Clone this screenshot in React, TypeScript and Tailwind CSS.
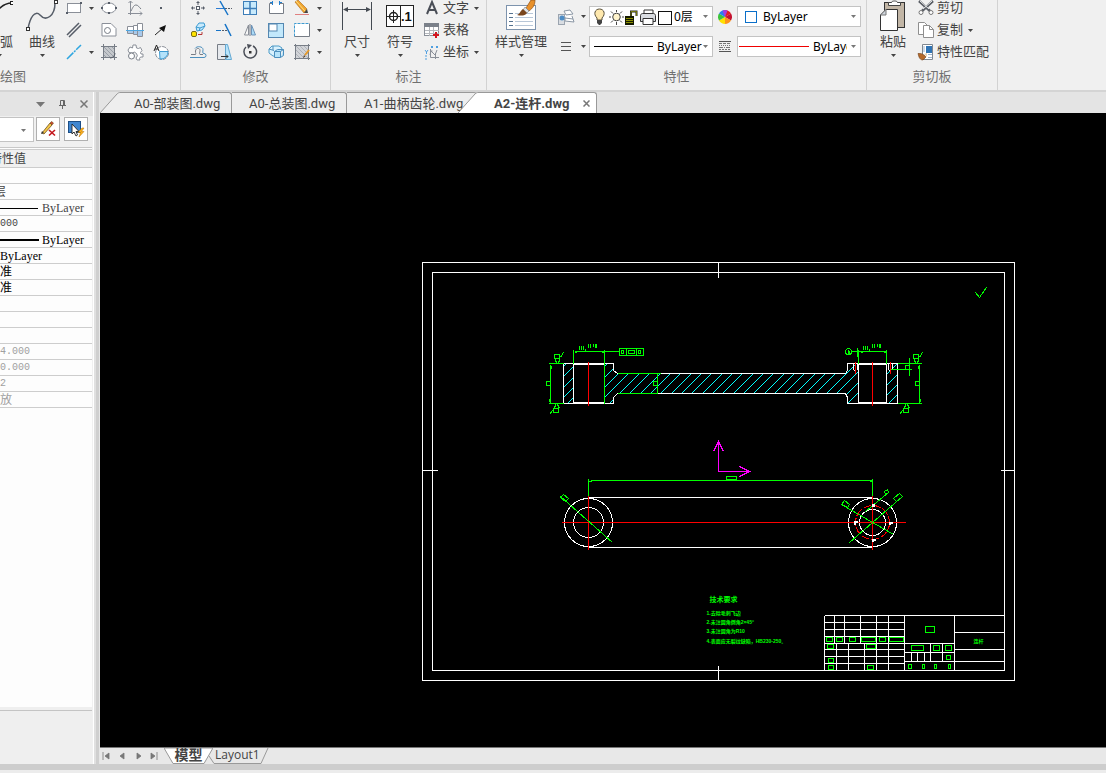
import React, { useState } from "react";
import type { ReactNode } from "react";

const Caret = ({ className = "", tone = "#444" }: { className?: string; tone?: string }) => (
  <svg width="5" height="3" viewBox="0 0 5 3" className={`shrink-0 ${className}`} aria-hidden="true">
    <path d="M0 0h5L2.5 3z" fill={tone} />
  </svg>
);

const CaretButton = ({ label }: { label: string }) => (
  <button type="button" aria-label={label} className="flex h-full w-full items-center justify-center">
    <Caret />
  </button>
);

const groupTitle = "text-[13px] leading-[27px] text-[#707070]";

function Group({ title, className, children }: { title: string; className: string; children: ReactNode }) {
  return (
    <section className={`flex shrink-0 flex-col border-r border-[#d2d2d2] ${className}`}>
      <div className="flex h-[66px] items-start">{children}</div>
      <h2 className={`text-center ${groupTitle}`}>{title}</h2>
    </section>
  );
}

function BigButton({ label, className, icon }: { label: string; className: string; icon: ReactNode }) {
  return (
    <button type="button" className={`flex shrink-0 flex-col items-center ${className}`}>
      {icon}
      <span className="text-[13px] leading-5 whitespace-nowrap">{label}</span>
      <Caret className="mt-[3px]" />
    </button>
  );
}

/* Big icons are drawn on a 34px high sheet. */
const Big = ({ w, children }: { w: number; children: ReactNode }) => (
  <svg width={w} height="34" viewBox={`0 0 ${w} 34`} fill="none" className="shrink-0" aria-hidden="true">
    {children}
  </svg>
);

/* Small icons are centred on 11,11. */
const Ico = ({ children }: { children: ReactNode }) => (
  <svg width="22" height="22" viewBox="0 0 22 22" fill="none" className="shrink-0" aria-hidden="true">
    {children}
  </svg>
);

const Node = ({ x, y }: { x: number; y: number }) => (
  <rect x={x - 1} y={y - 1} width="2" height="2" fill="#565d68" />
);

const drawTools: [string, ReactNode][][] = [
  [
    ["矩形", <Ico><rect x="4.500" y="6.500" width="13" height="9" fill="#fff" stroke="#8a8f98" /><Node x={4} y={16} /><Node x={18} y={6} /></Ico>],
    ["", null],
    ["椭圆", <Ico><ellipse cx="11" cy="11" rx="7" ry="5" fill="#fff" stroke="#8a8f98" /><Node x={4} y={11} /><Node x={18} y={11} /><Node x={11} y={6} /><Node x={11} y={16} /></Ico>],
    ["公式曲线", <Ico><path d="M6.500 4v14M4 16.500h14M4.500 6l2-2 2 2M16 14.500l2 2-2 2" stroke="#8a8f98" /><path d="M7 14c2-4 3-6 5-6s3 2 5 4" stroke="#777d86" /></Ico>],
    ["点", <Ico><rect x="10" y="10" width="2" height="2" fill="#565d68" /></Ico>],
  ],
  [
    ["平行线", <Ico><path d="M4 16 16 4M6 18 18 6" stroke="#565d68" strokeWidth="1.500" /></Ico>],
    ["", null],
    ["多边形", <Ico><path d="M4 4.500h9l5 5v7.500H4z" fill="#fff" stroke="#8a8f98" /><circle cx="9.500" cy="11.500" r="3" stroke="#777d86" /></Ico>],
    ["轴", <Ico><path d="M3.500 7.500h6v-1h4V4.500h5v13h-5v-2h-4v-1h-6z" fill="#fff" /><path d="M4 12h5.500v2H4zM10 12h4v3h-4zM14 12h4v5h-4z" fill="#a9c9ea" /><path d="M3.500 7.500h6v-1h4V4.500h5v13h-5v-2h-4v-1h-6zM9.500 7v8M13.500 6v10" stroke="#8a8f98" /><path d="M2 11.500h18" stroke="#4da6e0" /></Ico>],
    ["箭头", <Ico><path d="m5 16 8-7" stroke="#222" /><path d="m16 6-7 3 5 4z" fill="#111" /></Ico>],
  ],
  [
    ["中心线", <Ico><path d="M4 18 18 4" stroke="#2fa6e0" strokeWidth="1.500" strokeDasharray="9 1 2 1" /></Ico>],
    ["", null],
    ["填充", <Ico><rect x="5" y="5" width="12" height="12" fill="#c5c8cc" /><path d="m5 9 8 8M5 13l4 4M5 5l12 12M9 5l8 8M13 5l4 4" stroke="#9aa0a8" /><path d="M5.500 3v16M16.500 3v16M3 5.500h16M3 16.500h16" stroke="#777d86" /><path d="M17 12a5 5 0 0 1-5 5" stroke="#565d68" /></Ico>],
    ["齿轮", <Ico><path d="M5 11.500 4 9l2-3 2.500 1L9 4h3l.5 3 2 .5 2-1 1.500 3-1.500 2 .5 1.500h2v3h-2.500l-1 1.500.5 1.500h-3l-1-2a3 3 0 1 0-4-5z" fill="#fff" stroke="#8a8f98" /><circle cx="7.500" cy="15" r="3" fill="#fff" stroke="#777d86" /></Ico>],
    ["局部放大", <Ico><circle cx="12" cy="12" r="6.500" fill="#fff" stroke="#8a8f98" strokeDasharray="4 1" /><path d="M9.500 10.500h8.500a7 7 0 0 1-8 7.500z" fill="#b4e2fa" stroke="#3d9ad1" /><path d="m4 10 2.500-6L9 10M5 8h3" stroke="#222" /></Ico>],
  ],
];

const editTools: [string, ReactNode][][] = [
  [
    ["移动", <Ico><path d="m11 4 2 2H9zM11 18l2-2H9zM4 11l2-2v4zM18 11l-2-2v4z" fill="#565d68" /><path d="M11 6v2M11 14v2M6 11h2M14 11h2" stroke="#565d68" /><rect x="9.500" y="9.500" width="3" height="3" fill="#fff" stroke="#565d68" /></Ico>],
    ["裁剪", <Ico><path d="M3 11.500h8" stroke="#2b7cd3" /><path d="M12 11.500h7" stroke="#565d68" strokeDasharray="2 1" /><path d="m7 4 8 14" stroke="#1673c7" strokeWidth="1.500" /></Ico>],
    ["阵列", <Ico><rect x="4.500" y="4.500" width="13" height="13" fill="#c8eafc" stroke="#3d7eb8" /><rect x="5" y="12" width="6" height="5" fill="#fff" /><path d="M11 4.500v13M4.500 11.500h13" stroke="#3d7eb8" strokeWidth="1.500" /></Ico>],
    ["打断", <Ico><path d="M7 6.500H4.500v10h14v-10H15" fill="#fff" stroke="#777d86" /><path d="M7.500 4v4M14.500 4v4M5 5.500h3M14 5.500h3" stroke="#2280d0" /></Ico>],
    ["删除", <Ico><path d="m4 5 3-2 9 9-3 4z" fill="#f0a52e" stroke="#a9671a" strokeWidth=".6" /><path d="m5 4 9 10" stroke="#ffdf83" /><path d="m13 16 3-4 1 4z" fill="#444" /><path d="M4 17.500h14" stroke="#e08080" /></Ico>],
  ],
  [
    ["复制对象", <Ico><path d="m9 8 3-4h5l1 3-3 4-5 1z" fill="#c8eafc" stroke="#3d9ad1" /><path d="m9 8 4 1 5-2M13 9l-1 3" stroke="#3d9ad1" /><rect x="4.500" y="12.500" width="5" height="5" rx="1.500" fill="#ffe400" stroke="#776d19" /><path d="M11 15.500h4V13" stroke="#b43535" /></Ico>],
    ["延伸", <Ico><path d="M3 11.500h5" stroke="#1673c7" /><path d="M9 11.500h5" stroke="#565d68" strokeDasharray="2 1" /><path d="m12 5 6 12" stroke="#1673c7" strokeWidth="1.500" /></Ico>],
    ["镜像", <Ico><path d="M9.500 6v10h-4z" fill="#f7f7f7" stroke="#8a8f98" /><path d="M12.500 6v10h4z" fill="#a9daf6" stroke="#6d93b8" /><path d="M11 5v12" stroke="#777d86" /></Ico>],
    ["缩放", <Ico><rect x="3.500" y="4.500" width="15" height="14" fill="#c2e8fb" stroke="#5487b1" /><rect x="4" y="5" width="8" height="7" fill="#fff" stroke="#5487b1" /></Ico>],
    ["拉伸", <Ico><rect x="3.500" y="4.500" width="15" height="13" fill="#fff" /><path d="M3.500 17.500v-13h15" stroke="#3d9ad1" strokeDasharray="3 1" /><path d="M3.500 17.500h15v-13" stroke="#777d86" /></Ico>],
  ],
  [
    ["等距线", <Ico><path d="M4 13.500h4.500c1-1-1-3 .5-5s4-1 4 1-1 3 0 4h3" stroke="#777d86" /><path d="M3 16.500h14a2 2 0 0 0 0-4c-2 0-1-2-1-4 0-3-6-4-8-1" stroke="#4d8fbd" /></Ico>],
    ["拉伸面", <Ico><path d="M4.500 3.500h8v15h-8z" fill="#e6e9ed" stroke="#777d86" /><path d="M12.500 3.500h2l4 15h-6z" fill="#b7e4fb" stroke="#64a8d2" /><path d="M8 15.500h7m-2-2 2 2-2 2" stroke="#333" /></Ico>],
    ["旋转", <Ico><path d="M7 6a6.300 6.300 0 1 0 7-1" stroke="#4b4f58" strokeWidth="1.500" /><path d="m8 3 5 1-4 4z" fill="#4b4f58" /><rect x="10" y="10" width="2.500" height="2.500" fill="#333" /></Ico>],
    ["分解", <Ico><path d="m4 8 3-3h7l3 2-1 3-3 2v4l-5-1-4-3z" fill="#d9f1fd" stroke="#4d9cc8" /><path d="M9.500 10.500h6v6h-6zM9.500 10.500l3-2h6l-3 2M18.500 8.500v6l-3 2" fill="#b7e4fb" stroke="#4d8fbd" /><path d="m4 8 5 1.500M8 5v4" stroke="#4d8fbd" /></Ico>],
    ["填充编辑", <Ico><rect x="5" y="5" width="12" height="12" fill="#d2d4d8" /><path d="m5 9 8 8M5 13l4 4M5 5l12 12M9 5l8 8M13 5l4 4" stroke="#aeb2b8" /><path d="M4.500 3v16M17.500 3v16M3 4.500h16M3 17.500h16" stroke="#777d86" /><path d="m14 14 4-5" stroke="#e69a29" strokeWidth="2" /><path d="m12 17 1-3 1.500 1.500z" fill="#5b4530" /></Ico>],
  ],
];

function ToolGrid({ tools, className, carets }: { tools: [string, ReactNode][][]; className: string; carets: string[] }) {
  return (
    <div className={`grid auto-rows-[22px] items-center justify-items-center ${className}`}>
      {tools.flatMap((row, r) =>
        row.map(([name, icon], c) => {
          if (!icon) return carets[r] ? <CaretButton key={`${r}-${c}`} label={carets[r]} /> : <span key={`${r}-${c}`} />;
          return (
            <button key={`${r}-${c}`} type="button" aria-label={name}>
              {icon}
            </button>
          );
        }),
      )}
    </div>
  );
}

function ItemRow({ icon, label, caret }: { icon: ReactNode; label: string; caret?: boolean }) {
  return (
    <button type="button" className="flex h-[22px] items-center text-[13px] leading-5 whitespace-nowrap">
      {icon}
      <span className="pb-[2px]">{label}</span>
      {caret && <Caret className="ml-[5px]" />}
    </button>
  );
}

function Combo({ label, value, pad, children }: { label: string; value: string; pad: string; children?: ReactNode }) {
  return (
    <div className="relative h-[21px]">
      <select
        aria-label={label}
        defaultValue={value}
        className={`h-[21px] w-full appearance-none overflow-hidden border border-[#c3c3c3] bg-white font-['Noto_Sans','Noto_Sans_CJK_SC',sans-serif] text-[12px] leading-[19px] text-black outline-none ${pad}`}
      >
        <option>{value}</option>
      </select>
      <span className="pointer-events-none absolute inset-0 flex items-center">
        {children}
        <Caret className="mr-[5px] ml-auto" tone="#777" />
      </span>
    </div>
  );
}

function Ribbon() {
  const editRows = editTools.map((row) => [...row, ["", null] as [string, ReactNode]]);
  return (
    <header className="-mt-[3px] flex shrink-0 border-b-2 border-[#d4d4d4] bg-[#f0f0f0]">
      <section className="flex w-[181px] shrink-0 flex-col border-r border-[#d2d2d2]">
        <div className="flex h-[66px] items-start">
          <button type="button" aria-label="圆弧" className="flex w-[13px] shrink-0 flex-col items-start">
            <Big w={13}>
              <path d="M-3 14C2 8 6 6 12 6" stroke="#222" strokeWidth="1.500" />
              <rect x="10.500" y="4.500" width="3" height="3" fill="#fff" stroke="#222" />
            </Big>
            <span className="text-[13px] leading-5">弧</span>
            <Caret className="mt-[3px] -ml-[3px]" />
          </button>
          <BigButton
            label="曲线"
            className="ml-[9px] w-10"
            icon={
              <Big w={32}>
                <path d="M2 32c2-12 7-19 12-14 6 7 15 1 15-12" stroke="#565d68" strokeWidth="1.500" />
                <rect x=".5" y="30.500" width="3" height="3" fill="#fff" stroke="#333" />
                <rect x="28.500" y="3.500" width="3" height="3" fill="#fff" stroke="#333" />
              </Big>
            }
          />
          <ToolGrid tools={drawTools} className="grid-cols-[24px_10px_26px_26px_26px]" carets={["矩形选项", "", "中心线选项"]} />
        </div>
        <h2 className={groupTitle}>绘图</h2>
      </section>

      <Group title="修改" className="w-[150px]">
        <ToolGrid tools={editRows} className="ml-1 grid-cols-[26px_26px_26px_26px_26px_9px]" carets={["删除选项", "拉伸选项", "编辑选项"]} />
      </Group>

      <Group title="标注" className="w-[156px]">
        <BigButton
          label="尺寸"
          className="ml-1 w-11"
          icon={
            <Big w={30}>
              <path d="M.5 5v28M29.500 5v28" stroke="#444a52" />
              <path d="M2 12.500h26" stroke="#444a52" />
              <path d="m1 12.500 5-2.500v5zM29 12.500l-5-2.500v5z" fill="#444a52" />
            </Big>
          }
        />
        <BigButton
          label="符号"
          className="w-[42px]"
          icon={
            <Big w={28}>
              <rect x=".5" y="8.500" width="27" height="21" fill="#fff" stroke="#222" />
              <path d="M14.500 8v21M1 19.500h13M7.500 13v13" stroke="#222" />
              <circle cx="7.500" cy="19.500" r="4" stroke="#222" strokeWidth="1.500" />
              <text x="15" y="24" fontSize="13" fontWeight="700" fontFamily="Liberation Sans, sans-serif" fill="#111">.1</text>
            </Big>
          }
        />
        <div>
          <ItemRow label="文字" caret icon={<Ico><path d="m6 17 5-12 5 12M7.500 13h7" stroke="#4a4e57" strokeWidth="2" /></Ico>} />
          <ItemRow
            label="表格"
            icon={
              <Ico>
                <rect x="3.500" y="4.500" width="14" height="12" fill="#fff" stroke="#8a8f98" />
                <path d="M3 4h15v4H3z" fill="#7b818a" />
                <path d="M4 11.500h14M4 14.500h14M8.500 8v9M12.500 8v9" stroke="#b5b8bd" />
                <path d="M15 13v6M12 16h6" stroke="#d3161f" strokeWidth="2" />
              </Ico>
            }
          />
          <ItemRow
            label="坐标"
            caret
            icon={
              <Ico>
                <path d="M9.500 8v8.500H18M9 14l1-4 4 4 2-5M14.500 12v6M9.500 10h2" stroke="#8a8f98" />
                <path d="M4 9l1.500 2L7 9M5.500 11v2M4 15h2M4 18h2M10 5l2 2m0-2-2 2M15 5l2 2m0-2-2 2" stroke="#4f9fe0" />
              </Ico>
            }
          />
        </div>
      </Group>

      <Group title="特性" className="w-[380px]">
        <BigButton
          label="样式管理"
          className="ml-[3px] w-[62px]"
          icon={
            <Big w={32}>
              <rect x="1.500" y="8.500" width="29" height="24" fill="#fff" stroke="#7d93ad" />
              <path d="M4 16.500h4M4 20.500h4M4 24.500h4M4 28.500h4" stroke="#54718f" />
              <path d="M10 16.500h18M10 20.500h18M10 24.500h18M10 28.500h18" stroke="#b8c7d8" />
              <path d="M30 3h-4l-5 8 3 3c4-3 6-6 6-11z" fill="#e8912c" stroke="#8a4f18" strokeWidth=".7" />
              <path d="m20 10 4 4-2 2-4-3z" fill="#dfe3e7" stroke="#767b82" strokeWidth=".6" />
              <path d="m18 12 4 4c-2 3-6 3-10 2 3-1 3-4 6-6z" fill="#7a461c" />
            </Big>
          }
        />
        <div className="mt-[9px] ml-[2px] grid auto-rows-[21px] grid-cols-[24px_11px_124px_24px_124px] gap-y-[9px]">
          <button type="button" aria-label="图层" className="flex items-center justify-center">
            <Ico>
              <path d="m9 5 6-1 3 4-7 1zM9 8l1 4 8 1-1-3M10 12v3l9 1-1-3" fill="#fff" stroke="#8b97a5" />
              <rect x="3.500" y="8.500" width="6" height="10" fill="#d9dde2" stroke="#9ba4af" />
              <circle cx="7" cy="12" r="2.500" fill="#4d8dc6" />
            </Ico>
          </button>
          <CaretButton label="图层选项" />
          <Combo label="当前图层" value="0层" pad="pl-[84px]">
            <svg width="84" height="21" viewBox="0 0 84 21" fill="none" aria-hidden="true">
              <path d="M8 12c-4-4-2-9 2.500-9s6.500 5 2.500 9v2H8z" fill="#ffe9ae" stroke="#58503c" />
              <path d="M8 14h5v3l-2 2H10l-2-2z" fill="#444" />
              <circle cx="27.500" cy="11" r="3.800" fill="#fff4cc" stroke="#444" />
              <path d="M27.500 4v2M27.500 16v3M20 11h2M33 11h2M22 5.500l2 2M31 14.500l2 2M33 5.500l-2 2M24 14.500l-2 2" stroke="#444" />
              <path d="M36 10h9v9h-9z" fill="#151a00" />
              <path d="M37 12.500h7M37 14.500h7M37 16.500h7" stroke="#a8ac00" strokeWidth=".8" />
              <path d="M42 10V5.500h5.500V10" stroke="#222" strokeWidth="2" />
              <path d="M42 10V5.500h5.500V10" stroke="#a8ac00" strokeWidth=".6" />
              <path d="M55 9V4h9v5" fill="#fff" stroke="#333" />
              <path d="M51.500 9.500c0-1 1-2 2-2h11c1 0 2 1 2 2v6h-15z" fill="#d9dce1" stroke="#333" />
              <path d="M54 12.500h10v6H54z" fill="#fff" stroke="#333" />
              <rect x="69.500" y="5.500" width="13" height="13" fill="#fff" stroke="#111" />
            </svg>
          </Combo>
          <button type="button" aria-label="颜色" className="flex items-center justify-center">
            <svg width="14" height="14" viewBox="-7 -7 14 14" aria-hidden="true">
              <path d="M0 0V-7A7 7 0 0 1 6 -3.500z" fill="#e41c23" />
              <path d="M0 0 6-3.500A7 7 0 0 1 6 3.500z" fill="#c41230" />
              <path d="M0 0 6 3.500A7 7 0 0 1 0 7z" fill="#ff941a" />
              <path d="M0 0V7A7 7 0 0 1-6 3.500z" fill="#ffe100" />
              <path d="M0 0-6 3.500A7 7 0 0 1-6-3.500z" fill="#3dc43c" />
              <path d="M0 0-6-3.500A7 7 0 0 1 0-7z" fill="#2d7cf0" />
              <path d="M0 0-2.500-6.500A7 7 0 0 1 2.500-6.500z" fill="#a63bde" />
            </svg>
          </button>
          <Combo label="当前颜色" value="ByLayer" pad="pl-[25px]">
            <span className="ml-2 size-3 border border-[#0a6fc9] bg-white" />
          </Combo>
          <button type="button" aria-label="线宽" className="flex items-center justify-center">
            <svg width="10" height="9" viewBox="0 0 10 9" shapeRendering="crispEdges" aria-hidden="true">
              <path d="M0 .5h10M0 4.500h10M0 8.500h10" stroke="#555" />
            </svg>
          </button>
          <CaretButton label="线宽选项" />
          <Combo label="当前线宽" value="ByLayer" pad="pl-[67px]">
            <span className="ml-[5px] h-px w-[59px] bg-black" />
          </Combo>
          <button type="button" aria-label="线型" className="flex items-center justify-center">
            <svg width="12" height="11" viewBox="0 0 12 11" shapeRendering="crispEdges" aria-hidden="true">
              <path d="M0 .5h12M0 10.500h12" stroke="#555" />
              <path d="M0 2.500h12" stroke="#777" strokeDasharray="3 1" />
              <path d="M0 4.500h12" stroke="#777" strokeDasharray="1 1" />
              <path d="M0 6.500h12" stroke="#777" strokeDasharray="4 1 1 1" />
              <path d="M0 8.500h12" stroke="#777" strokeDasharray="2 1" />
            </svg>
          </button>
          <Combo label="当前线型" value="ByLayer" pad="pl-[75px] pr-[13px]">
            <span className="ml-[2px] h-px w-[70px] bg-[#f00000]" />
          </Combo>
        </div>
      </Group>

      <Group title="剪切板" className="w-[131px]">
        <BigButton
          label="粘贴"
          className="ml-1 w-11"
          icon={
            <Big w={26}>
              <rect x="4.500" y="5.500" width="20" height="25" fill="#c2b6a6" stroke="#333" />
              <path d="M8.500 8.500v-3h3c0-2 6-2 6 0h3v3z" fill="#fff" stroke="#444" />
              <path d="M6 12.500h11.500v21H.5V18z" fill="#fff" stroke="#333" />
              <path d="M6 12.500V18H.5z" fill="#cfd6dd" stroke="#777" />
            </Big>
          }
        />
        <div>
          <ItemRow
            label="剪切"
            icon={
              <Ico>
                <path d="m4 4 11 10M18 4 7 14" stroke="#5a5e65" strokeWidth="2.500" />
                <path d="m5 4 9 8M17 4 8 12" stroke="#e8eaec" />
                <circle cx="6" cy="15.500" r="2" fill="#fff" stroke="#777" />
                <circle cx="16" cy="15.500" r="2" fill="#fff" stroke="#777" />
              </Ico>
            }
          />
          <ItemRow
            label="复制"
            caret
            icon={
              <Ico>
                <path d="M3.500 3.500h6l3 3v9h-9z" fill="#fff" stroke="#8f8f8f" />
                <path d="M8.500 6.500h6l4 4v8h-10z" fill="#fff" stroke="#8f8f8f" />
                <path d="M14.500 6.500v4h4" stroke="#8f8f8f" />
              </Ico>
            }
          />
          <ItemRow
            label="特性匹配"
            icon={
              <Ico>
                <path d="M7.500 3.500h10v15h-10z" fill="#fff" stroke="#7f8790" />
                <path d="M11 5h6v7h-6z" fill="#2f74b5" />
                <path d="M9 5v6M13 13.500h4M13 16.500h4" stroke="#9db4cc" />
                <path d="M3 12.500c3 0 4 0 6 1.500l2 2-3 3c-2 0-3-1-4-3z" fill="#b5692a" stroke="#6e3e17" strokeWidth=".6" />
                <path d="m9 13 3-1v4z" fill="#ead4b4" />
              </Ico>
            }
          />
        </div>
      </Group>
    </header>
  );
}

/* ---------- property panel ---------- */

const cell = "h-4 border-b border-[#cdcdcd] p-0 text-left font-normal whitespace-nowrap";

function LineValue({ bold }: { bold?: boolean }) {
  return (
    <span className="flex items-center">
      <span className={bold ? "h-[2px] w-[39px] bg-black" : "h-px w-[38px] bg-black"} />
      <span className={bold ? "ml-[3px]" : "ml-1"}>ByLayer</span>
    </span>
  );
}

const Num = ({ children }: { children: ReactNode }) => (
  <span className="block font-['Liberation_Mono',monospace] text-[10px] leading-[15px]">{children}</span>
);

const rows: { name: string; value: ReactNode; tone: string }[] = [
  { name: "常规", value: "", tone: "text-[#444]" },
  { name: "层", value: <span className="-ml-[6px] block">层</span>, tone: "text-[#444]" },
  { name: "线型", value: <LineValue />, tone: "text-[#444]" },
  { name: "线型比例", value: <Num>000</Num>, tone: "text-[#444]" },
  { name: "线宽", value: <LineValue bold />, tone: "text-black" },
  { name: "颜色", value: "ByLayer", tone: "text-black" },
  { name: "文本风格", value: "准", tone: "text-black" },
  { name: "标注风格", value: "准", tone: "text-black" },
  { name: "空行一", value: "", tone: "text-black" },
  { name: "空行二", value: "", tone: "text-black" },
  { name: "空行三", value: "", tone: "text-black" },
  { name: "宽度", value: <Num>4.000</Num>, tone: "text-[#a0a0a0]" },
  { name: "高度", value: <Num>0.000</Num>, tone: "text-[#a0a0a0]" },
  { name: "图幅", value: <Num>2</Num>, tone: "text-[#a0a0a0]" },
  { name: "方向", value: "放", tone: "text-[#a0a0a0]" },
];

function PropertyPanel() {
  return (
    <aside className="flex w-[100px] shrink-0 border-r border-[#e6e6e6] bg-[#f0f0f0]">
      <div className="flex min-w-0 flex-1 flex-col">
        <div className="flex h-6 shrink-0 items-center justify-end gap-[14px] bg-[#e4e4e4] pr-[5px]">
          <button type="button" aria-label="面板菜单">
            <svg width="9" height="5" viewBox="0 0 9 5" aria-hidden="true"><path d="M0 0h9L4.500 5z" fill="#777" /></svg>
          </button>
          <button type="button" aria-label="固定面板">
            <svg width="7" height="9" viewBox="0 0 7 9" fill="none" aria-hidden="true"><path d="M1.500 5V.5h4V5M0 5.500h7M3.500 6v3M4.500 1v4" stroke="#666" /></svg>
          </button>
          <button type="button" aria-label="关闭面板">
            <svg width="8" height="8" viewBox="0 0 8 8" aria-hidden="true"><path d="m.5.5 7 7m0-7-7 7" stroke="#777" strokeWidth="1.500" /></svg>
          </button>
        </div>
        <div className="flex h-[31px] shrink-0 items-start pt-px">
          <div className="relative h-[25px] w-[34px]">
            <select aria-label="选择对象" className="h-[25px] w-[34px] appearance-none border border-l-0 border-[#c3c3c3] bg-white">
              <option> </option>
            </select>
            <Caret className="pointer-events-none absolute top-[12px] left-[21px]" tone="#777" />
          </div>
          <button type="button" aria-label="清除选择" className="ml-[2px] flex size-6 items-center justify-center border border-[#b0b0b0] bg-white">
            <svg width="18" height="18" viewBox="0 0 18 18" fill="none" className="shrink-0" aria-hidden="true">
              <path d="m3 13 8-10 2 2-8 9z" fill="#f4c84a" stroke="#6e4b19" strokeWidth=".8" />
              <path d="m11 3 1.500-1.500 2 1.500L13 5z" fill="#c9472e" stroke="#6e4b19" strokeWidth=".6" />
              <path d="m2 14 1-3 2 2z" fill="#333" />
              <path d="m10 10 6 5.500m0-5.500-6 5.500" stroke="#c4161c" strokeWidth="1.600" />
            </svg>
          </button>
          <button type="button" aria-label="快速选择" className="ml-[4px] flex size-6 items-center justify-center border border-[#b0b0b0] bg-white">
            <svg width="18" height="18" viewBox="0 0 18 18" fill="none" className="shrink-0" aria-hidden="true">
              <rect x="1.500" y="1.500" width="12" height="11" fill="#3f86d0" stroke="#1d4f86" />
              <path d="M5 4v10l2-2 2 4 1.500-1-1.500-3.500h3z" fill="#fff" stroke="#222" strokeWidth=".9" />
              <path d="m15 8-4 4.500h2.500L12 17l5-5.500h-2.500L17 8z" fill="#ffb31a" stroke="#b56c00" strokeWidth=".5" />
            </svg>
          </button>
        </div>
        <div className="mr-px flex-1 overflow-hidden border-t border-[#c8c8c8] bg-[#fdfdfd] pt-px">
          <table className="w-full table-fixed border-separate border-spacing-0 font-['Liberation_Serif','Noto_Sans_CJK_SC',serif] text-[12px] leading-[16px]">
            <thead>
              <tr>
                <th className="h-[19px] border-t border-b border-[#cdcdcd] bg-[#f0f0f0] p-0 text-left font-normal whitespace-nowrap text-[#444]">
                  <div className="-ml-[10px] h-[17px] pt-px">特性值</div>
                </th>
              </tr>
            </thead>
            <tbody>
              {rows.map((r) => (
                <tr key={r.name}>
                  <td className={`${cell} ${r.tone}`}>
                    <div className="h-[15px] overflow-hidden">{r.value}</div>
                  </td>
                </tr>
              ))}
            </tbody>
          </table>
        </div>
        <div className="mr-px h-[57px] shrink-0 bg-[#efefef] pt-[3px]">
          <div className="border-t border-[#c4c4c4]" />
        </div>
      </div>
      <div className="w-px bg-white" />
      <div className="w-[2px] bg-[#e0e0e0]" />
      <div className="w-[3px] bg-[#cfcfcf]" />
    </aside>
  );
}

/* ---------- document tabs ---------- */

const docs = [
  { name: "A0-部装图.dwg", box: "w-[112px] pl-[14px]" },
  { name: "A0-总装图.dwg", box: "w-[115px] pl-[17px]" },
  { name: "A1-曲柄齿轮.dwg", box: "w-[130px] pl-[17px]" },
];

const Slant = ({ fill }: { fill: string }) => (
  <svg width="20" height="21" viewBox="0 0 20 21" className="shrink-0" aria-hidden="true">
    <path d="M0 21 17 2c1-1 2-1.500 3-1.500V21z" fill={fill} />
    <path d="M0 21 17 2c1-1 2-1.500 3-1.500" fill="none" stroke="#999" />
  </svg>
);

function DocTabs() {
  return (
    <nav aria-label="图纸" className="flex h-[21px] shrink-0 bg-[#e4e4e4] font-['Roboto','Noto_Sans_CJK_SC',sans-serif] text-[13px] leading-[19px] text-[#444]">
      <Slant fill="#eeeeee" />
      {docs.map((d) => (
        <button key={d.name} type="button" className={`shrink-0 rounded-tr-[3px] border-t border-r border-[#999] bg-[#eee] text-left whitespace-nowrap ${d.box}`}>
          {d.name}
        </button>
      ))}
      <div className="z-10 -ml-[19px] flex shrink-0">
        <Slant fill="#ffffff" />
        <div className="flex w-[119px] items-center rounded-tr-[3px] border-t border-r border-[#999] bg-white pl-4">
          <button type="button" aria-current="page" className="font-bold whitespace-nowrap">
            A2-连杆.dwg
          </button>
          <button type="button" aria-label="关闭 A2-连杆.dwg" className="mr-[6px] ml-auto">
            <svg width="7" height="7" viewBox="0 0 7 7" aria-hidden="true"><path d="m.5.5 6 6m0-6-6 6" stroke="#777" strokeWidth="1.500" /></svg>
          </button>
        </div>
      </div>
    </nav>
  );
}

/* ---------- drawing ---------- */

const G = "#00ff00";
const hatch = Array.from({ length: 46 }, (_, i) => 929 + Math.round(i * 10.35));
const HUB_LEFT = "M563 363H573V403H563z";
const WEB = "M604 363H613V370L617 373H845L847 370V363H858V403H847V397L845 393H617L613 397V403H604z";
const HUB_RIGHT = "M886 363H897V403H886z";

const Box = ({ b }: { b: [number, number, number, number] }) => <rect x={b[0]} y={b[1]} width={b[2]} height={b[3]} stroke={G} />;

const titleBoxes: [number, number, number, number][] = [
  [826, 637, 6, 4], [836, 637, 6, 4], [849, 637, 6, 4], [861, 637, 14, 4], [879, 637, 6, 4], [889, 637, 14, 4],
  [827, 644, 6, 4], [866, 644, 9, 4], [828, 658, 5, 4], [828, 665, 5, 4], [867, 665, 6, 4],
  [925, 626, 9, 6], [911, 645, 12, 5], [933, 645, 6, 5], [945, 645, 6, 5], [946, 655, 4, 4],
  [908, 664, 3, 4], [922, 664, 2, 4], [934, 664, 2, 4], [948, 664, 2, 4],
];

function Drawing() {
  return (
    <svg className="block h-full w-full" viewBox="100 113 1006 634" preserveAspectRatio="xMinYMin meet" fill="none" shapeRendering="crispEdges" role="img" aria-label="连杆零件图">
      <defs>
        <clipPath id="section">
          <path d={HUB_LEFT} />
          <path d={WEB} />
          <path d={HUB_RIGHT} />
        </clipPath>
      </defs>
      <g transform="translate(.5 .5)" strokeWidth="1">
        {/* sheet */}
        <g stroke="#fff">
          <path d="M422 262h592v418h-592zM432 272h572v398h-572z" />
          <path d="M718 262v15M718 665v15M422 470h15M1000 470h14" />
        </g>
        <path d="m975 292 4 5 7-10" stroke={G} />

        {/* section view */}
        <g clipPath="url(#section)" stroke="#00ffff">
          {hatch.map((s) => (
            <path key={s} d={`M${s - 410} 410 ${s - 355} 355`} />
          ))}
        </g>
        <g stroke="#fff">
          <path d="M563 363H613V370L617 373H845L847 370V363H897V403H847V397L845 393H617L613 397V403H563z" />
          <path d="M573 364H604M573 402H604M858 364H886M858 402H886M573 363V403M858 363V403M886 363V403" />
          <path d="M853 363v6l2 2M857 363v6M888 363v6l2 2M892 363v6" />
        </g>
        <path d="M588 361V405M872 361V405M855 361V373M890 361V373" stroke="#f00" />
        <g stroke={G}>
          <path d="M617 373H660M617 393H656M657 373V393M653 381h4v4h-4z" />
          <path d="M604 349V403M573 349V363M574 351H619M574 352h2M601 352h3M619 348h24v7h-24zM626 348v7M636 348v7M621 350h2v3h-2zM628 350h6v3h-6zM638 350h2v3h-2z" />
          <path d="M579 345v4M581 345v4M583 345v4M585 348v3M588 343v4M590 343v4M592 346h1v-3M595 343v4h1v-4" />
          <path d="M548 363H563M548 403H563M550 364V403M551 365v3M549 398v3M546 381h4v4h-4z" />
          <path d="M554 354h5v4h-5zM555 359l1 4M559 359l-1 4M560 357l3-5M553 408h5v4h-5zM555 404l-1 4M557 404l2 4M549 414l6-8" />
          <path d="M858 349V363M886 349V363M851 351h6M858 351H886M857 347v9M860 352h2M883 352h2" />
          <circle cx="848" cy="351" r="3" />
          <path d="M848 349v4M849 350v3" />
          <path d="M863 345v4M865 345v4M867 345v4M869 348v3M872 343v4M874 343v4M876 346h1v-3M879 343v4h1v-4" />
          <path d="M897 363H921M897 403H921M919 364V403M918 365v3M920 398v3M915 381h4v4h-4z" />
          <path d="M890 369H911M909 357V375M905 365h4v4h-4z" />
          <path d="M913 354h5v4h-5zM914 359l1 4M918 359l-1 4M919 357l3-5M903 408h5v4h-5zM905 404l-1 4M907 404l2 4M899 414l6-8" />
        </g>

        {/* coordinate mark */}
        <path d="M718 441V471H748M713 451l5-10 5 10M739 466l10 5-10 5" stroke="#f0f" />

        {/* plan view */}
        <g stroke="#fff">
          <path d="M588 497H872M588 547H872" />
          <circle cx="588" cy="522" r="24" />
          <circle cx="588" cy="522" r="15" />
          <circle cx="872" cy="522" r="24" />
          <circle cx="872" cy="522" r="13" />
        </g>
        <circle cx="872" cy="522" r="17" stroke="#f00" strokeDasharray="8 2" />
        <path d="M561 522H905M588 495V549M872 495V549" stroke="#f00" />
        <g stroke={G}>
          <path d="M588 478V495M872 478V495M588 481h3M869 481h3M590 480H871M726 476h10v3h-10z" />
          <path d="M560 496 612 542M902 496 849 542M888 492 865 511M841 504 893 534" />
          <path d="M560 497l3-3 5 4-3 3zM893 498l6-5 3 3-6 5zM841 504l3-4 5 4-2 3zM884 491l3-2 1 3-3 2z" />
        </g>
        <g fill="#fff">
          <path d="M854 520h3v2h-2v2h-2v-3zM888 521h4v2h-2v1h-2zM871 503h3v3h-3zM871 538h4v2h-2v1h-2z" />
        </g>

        {/* technical notes */}
        <g fill={G} fontFamily="'Liberation Sans','Noto Sans CJK SC',sans-serif" fontSize="5" fontWeight="700">
          <text x="709" y="601" fontSize="7">技术要求</text>
          <text x="706" y="614">1.去除毛刺飞边</text>
          <text x="706" y="623">2.未注圆角倒角2×45°</text>
          <text x="706" y="632">3.未注圆角为R10</text>
          <text x="706" y="642">4.表面应无裂纹缺陷，HB230-250。</text>
          <text x="973" y="642">连杆</text>
        </g>

        {/* title block */}
        <g stroke="#fff">
          <path d="M824 615H1004M824 615V670M904 615V670M954 615V670" />
          <path d="M824 622H904M824 629H904M824 636H904M824 643H954M824 649H904M824 656H904M824 663H904" />
          <path d="M834 615V643M844 615V643M860 615V643M876 615V670M888 615V670" />
          <path d="M836 643V670M848 643V670M864 643V670" />
          <path d="M904 652H954M904 661H954M930 643V661M942 643V661M911 652V661M917 652V661M924 652V661" />
          <path d="M954 632H1004M954 649H1004M954 661H1004" />
        </g>
        {titleBoxes.map((b) => (
          <Box key={b.join()} b={b} />
        ))}
      </g>
    </svg>
  );
}

/* ---------- layout tabs ---------- */

const navIcons: [string, string][] = [
  ["第一个", "M1 0v8M7 1 3 4l4 3z"],
  ["上一个", "M6 1 2 4l4 3z"],
  ["下一个", "M3 1l4 3-4 3z"],
  ["最后一个", "M1 1l4 3-4 3zM7 0v8"],
];

function LayoutTabs() {
  const [active, setActive] = useState(0);
  return (
    <nav aria-label="布局" className="flex h-[17px] shrink-0 overflow-hidden border-t border-[#777] bg-[#e8e8e8] text-[#444]">
      {navIcons.map(([name, d]) => (
        <button key={name} type="button" aria-label={name} className="flex w-4 items-center pl-[2px]">
          <svg width="8" height="8" viewBox="0 0 8 8" aria-hidden="true"><path d={d} fill="#777" stroke="#777" strokeWidth=".8" /></svg>
        </button>
      ))}
      <button type="button" onClick={() => setActive(0)} aria-pressed={active === 0} className="relative flex h-4 w-[49px] items-start justify-center">
        <svg width="49" height="16" viewBox="0 0 49 16" className="absolute inset-0" aria-hidden="true">
          <path d="M0 0 9 15.500H40L49 0z" fill="#fff" stroke="#999" />
        </svg>
        <span className="relative text-[14px] leading-[13px] font-bold">模型</span>
      </button>
      <button type="button" onClick={() => setActive(1)} aria-pressed={active === 1} className="relative flex h-4 w-[58px] items-start">
        <svg width="62" height="16" viewBox="0 0 62 16" className="absolute top-0 -left-1" aria-hidden="true">
          <path d="M0 8 5 15.500H52L59 0" fill="none" stroke="#999" />
        </svg>
        <span className="relative pl-[2px] text-[12px] leading-[14px]">Layout1</span>
      </button>
    </nav>
  );
}

export default function App() {
  return (
    <div className="flex h-screen w-full flex-col overflow-hidden bg-[#f0f0f0] font-['Open_Sans','Noto_Sans_CJK_SC',sans-serif] text-[13px] text-[#444]">
      <Ribbon />
      <div className="flex min-h-0 flex-1">
        <PropertyPanel />
        <main className="flex min-w-0 flex-1 flex-col">
          <DocTabs />
          <div className="min-h-0 flex-1 bg-black">
            <Drawing />
          </div>
          <LayoutTabs />
        </main>
      </div>
      <footer className="h-[9px] shrink-0 border-b-[3px] border-[#ececec] bg-[#cdcdcd]" />
    </div>
  );
}
